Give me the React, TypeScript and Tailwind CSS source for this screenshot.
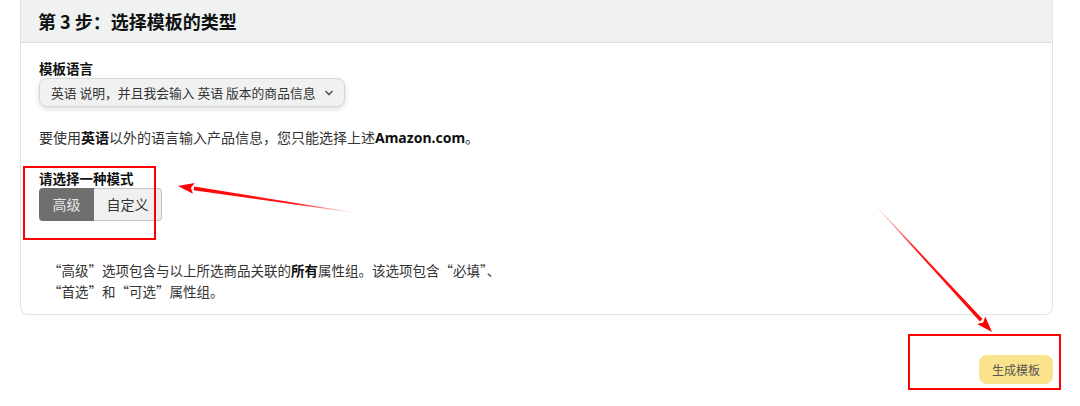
import React from "react";

type Pt = [number, number];

function Arrow({ id, tail, tip, head = 16, halfHead = 5.5, shaft = 1.8 }: { id: string; tail: Pt; tip: Pt; head?: number; halfHead?: number; shaft?: number }) {
  const dx = tip[0] - tail[0];
  const dy = tip[1] - tail[1];
  const len = Math.hypot(dx, dy);
  const ux = dx / len;
  const uy = dy / len;
  const nx = -uy;
  const ny = ux;
  const bx = tip[0] - ux * head;
  const by = tip[1] - uy * head;
  const shaftPts = [
    [tail[0] + nx * 0.3, tail[1] + ny * 0.3],
    [bx + nx * shaft, by + ny * shaft],
    [bx - nx * shaft, by - ny * shaft],
    [tail[0] - nx * 0.3, tail[1] - ny * 0.3],
  ]
    .map((p) => p.join(","))
    .join(" ");
  const headPts = [
    [tip[0], tip[1]],
    [bx + nx * halfHead, by + ny * halfHead],
    [bx + ux * 3, by + uy * 3],
    [bx - nx * halfHead, by - ny * halfHead],
  ]
    .map((p) => p.join(","))
    .join(" ");
  return (
    <g>
      <defs>
        <linearGradient id={id} gradientUnits="userSpaceOnUse" x1={tail[0]} y1={tail[1]} x2={tip[0]} y2={tip[1]}>
          <stop offset="0" stopColor="#ff0000" stopOpacity="0" />
          <stop offset="0.35" stopColor="#ff0000" stopOpacity="0.9" />
          <stop offset="1" stopColor="#ff0000" stopOpacity="1" />
        </linearGradient>
      </defs>
      <polygon points={shaftPts} fill={`url(#${id})`} />
      <polygon points={headPts} fill="#ff0000" />
    </g>
  );
}

export default function App() {
  return (
    <div
      className="relative w-[1080px] h-[406px] overflow-hidden bg-white text-[#0f1111]"
      style={{ fontFamily: '"Noto Sans CJK SC", "Noto Sans", sans-serif' }}
    >
      <div className="ml-[20px] -mt-[9px] w-[1033px] rounded-[8px] border border-[#e3e3e3]">
        <div className="pt-[8px] bg-[#f0f2f2] rounded-t-[8px] border-b border-[#dcdede]">
          <div className="h-[42px] flex items-center pl-[17px] text-[18px] font-bold leading-none">
            第 3 步：选择模板的类型
          </div>
        </div>
        <div className="pl-[18px] pt-[16px] pb-[12px]">
          <div className="text-[13.5px] font-bold leading-[18px]">模板语言</div>
          <div className="mt-[1px] w-[306px] h-[29px] flex items-center justify-between pl-[11px] pr-[10px] rounded-[8px] border border-[#d5d9d9] bg-[#f0f2f2] shadow-[0_2px_5px_rgba(15,17,17,0.15)] text-[12.8px] text-[#333] whitespace-nowrap">
            <span>英语 说明，并且我会输入 英语 版本的商品信息</span>
            <svg width="10" height="8" viewBox="0 0 10 8" className="shrink-0 ml-[4px]">
              <path d="M1.5 2 L5 5.5 L8.5 2" fill="none" stroke="#555" strokeWidth="1.6" />
            </svg>
          </div>
          <div className="mt-[20px] text-[14px] leading-[20px] text-[#333]">
            要使用<b className="text-[#0f1111]">英语</b>以外的语言输入产品信息，您只能选择上述
            <b className="text-[#0f1111]" style={{ fontFamily: '"Noto Sans", sans-serif' }}>Amazon.com</b>。
          </div>
          <div className="mt-[21px] text-[13.5px] font-bold leading-[18px]">请选择一种模式</div>
          <div className="mt-[1px] flex h-[33px] w-[123px] text-[14px]">
            <div className="w-[55px] flex items-center justify-center bg-[#6f6f6f] text-[#e8e8e8] rounded-l-[4px]">高级</div>
            <div className="w-[68px] flex items-center justify-center bg-[#f0f0f0] text-[#333] border border-l-0 border-[#c4c4c4] rounded-r-[4px]">自定义</div>
          </div>
          <div className="mt-[39px] ml-[9px] text-[13.5px] leading-[21px] text-[#333]">
            <div>“高级”选项包含与以上所选商品关联的<b className="text-[#0f1111]">所有</b>属性组。该选项包含“必填”、</div>
            <div>“首选”和“可选”属性组。</div>
          </div>
        </div>
      </div>
      <div className="ml-[20px] w-[1033px] mt-[40px] flex justify-end">
        <div className="h-[29px] w-[74px] flex items-center justify-center rounded-[8px] bg-[#fbe38c] text-[12px] text-[#555]">
          生成模板
        </div>
      </div>

      <div className="absolute left-[23px] top-[166px] w-[133px] h-[74px] border-2 border-[#ff0000]" />
      <div className="absolute left-[908px] top-[334px] w-[153px] h-[56px] border-2 border-[#ff0000]" />
      <svg className="absolute left-0 top-0 pointer-events-none" width="1080" height="406">
        <Arrow id="g1" tail={[357, 213]} tip={[178, 186]} />
        <Arrow id="g2" tail={[875, 205]} tip={[992, 332]} />
      </svg>
    </div>
  );
}
